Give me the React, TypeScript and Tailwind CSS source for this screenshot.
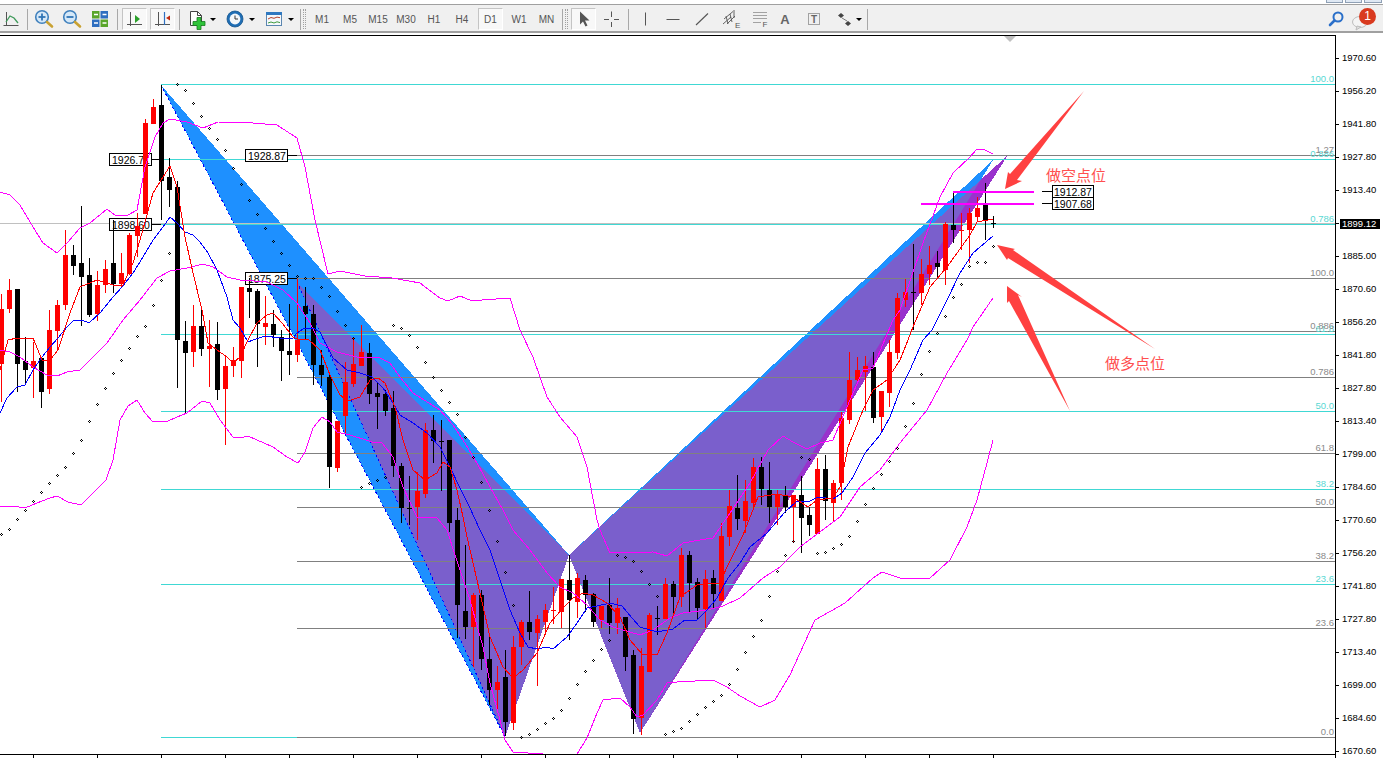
import React from 'react';

// [x, bodyTop, bodyBottom, high, low, isRed]
const CANDLES: [number, number, number, number, number, number][] = [
  [1, 309, 364, 294, 402, 1], [9, 290, 309, 279, 313, 1], [17, 289, 364, 289, 392, 0], [25, 361, 370, 337, 385, 0],
  [33, 361, 368, 342, 398, 1], [41, 358, 392, 357, 408, 0], [49, 330, 389, 310, 394, 1], [57, 305, 331, 300, 351, 1],
  [65, 255, 305, 230, 310, 1], [73, 255, 266, 245, 275, 0], [81, 263, 277, 206, 326, 0], [89, 275, 315, 258, 317, 0],
  [97, 285, 314, 271, 321, 1], [105, 269, 285, 260, 293, 1], [113, 263, 284, 220, 293, 0], [121, 273, 284, 253, 288, 1],
  [129, 235, 274, 233, 275, 1], [137, 226, 236, 213, 257, 1], [145, 123, 214, 119, 214, 1], [153, 107, 124, 99, 124, 1],
  [161, 105, 181, 85, 220, 0], [169, 177, 190, 158, 207, 0], [177, 187, 340, 181, 388, 0], [185, 341, 353, 321, 414, 0],
  [193, 326, 352, 305, 367, 1], [201, 326, 349, 307, 356, 0], [209, 346, 349, 320, 387, 1], [217, 344, 390, 322, 400, 0],
  [225, 366, 389, 357, 445, 1], [233, 360, 366, 347, 377, 1], [241, 287, 361, 287, 378, 1], [249, 288, 292, 278, 318, 0],
  [257, 291, 324, 289, 367, 0], [265, 323, 327, 296, 345, 1], [273, 324, 335, 310, 347, 0], [281, 337, 351, 330, 381, 0],
  [289, 351, 355, 304, 375, 0], [297, 340, 355, 279, 362, 1], [305, 306, 314, 287, 340, 0], [313, 314, 365, 305, 385, 0],
  [321, 365, 375, 350, 386, 0], [329, 377, 467, 373, 488, 0], [337, 421, 468, 421, 472, 1], [345, 382, 416, 362, 434, 1],
  [353, 364, 384, 338, 387, 1], [361, 352, 366, 325, 366, 1], [369, 353, 394, 343, 404, 0], [377, 393, 397, 383, 429, 0],
  [385, 394, 411, 390, 416, 0], [393, 408, 466, 391, 477, 0], [401, 466, 508, 463, 523, 0], [409, 508, 509, 476, 525, 0],
  [417, 491, 507, 472, 540, 1], [425, 430, 494, 423, 498, 1], [433, 430, 441, 415, 463, 0], [441, 441, 442, 420, 491, 0],
  [449, 440, 523, 440, 532, 0], [457, 520, 605, 508, 638, 0], [465, 611, 627, 545, 639, 0], [473, 595, 627, 593, 667, 1],
  [481, 595, 659, 590, 670, 0], [489, 659, 690, 635, 705, 0], [497, 682, 690, 666, 710, 1], [505, 677, 722, 650, 736, 0],
  [513, 647, 723, 636, 730, 1], [521, 622, 647, 620, 665, 1], [529, 622, 632, 591, 640, 0], [537, 619, 633, 615, 686, 1],
  [545, 610, 622, 604, 634, 1], [553, 610, 611, 587, 624, 1], [561, 579, 612, 579, 628, 1], [569, 580, 600, 555, 640, 0],
  [577, 578, 602, 573, 618, 1], [585, 580, 595, 575, 612, 0], [593, 594, 622, 593, 627, 0], [601, 606, 620, 606, 628, 1],
  [609, 605, 623, 578, 634, 0], [617, 608, 623, 598, 634, 1], [625, 617, 657, 617, 671, 0], [633, 655, 719, 650, 734, 0],
  [641, 666, 718, 648, 735, 1], [649, 615, 672, 613, 672, 1], [657, 618, 619, 606, 635, 0], [665, 584, 619, 578, 619, 1],
  [673, 584, 597, 581, 615, 0], [681, 555, 597, 548, 607, 1], [689, 555, 583, 551, 612, 0], [697, 582, 608, 578, 620, 0],
  [705, 579, 609, 570, 628, 1], [713, 578, 594, 570, 608, 0], [721, 536, 601, 523, 601, 1], [729, 506, 537, 490, 546, 1],
  [737, 508, 519, 475, 530, 0], [745, 501, 521, 480, 533, 1], [753, 467, 503, 458, 508, 1], [761, 467, 489, 457, 505, 0],
  [769, 490, 507, 462, 523, 0], [777, 495, 507, 490, 525, 1], [785, 496, 507, 486, 513, 0], [793, 495, 507, 495, 542, 1],
  [801, 495, 518, 476, 553, 0], [809, 515, 525, 507, 536, 0], [817, 469, 534, 458, 534, 1], [825, 469, 501, 455, 520, 0],
  [833, 483, 503, 480, 521, 1], [841, 418, 483, 412, 500, 1], [849, 380, 420, 352, 424, 1], [857, 370, 380, 357, 384, 1],
  [865, 366, 372, 356, 411, 1], [873, 367, 418, 352, 423, 0], [881, 391, 417, 391, 432, 1], [889, 352, 393, 340, 407, 1],
  [897, 298, 353, 293, 359, 1], [905, 292, 300, 279, 307, 1], [913, 292, 293, 244, 330, 0], [921, 274, 293, 259, 305, 1],
  [929, 265, 274, 246, 285, 1], [937, 263, 267, 251, 277, 0], [945, 224, 270, 222, 285, 1], [953, 225, 230, 193, 243, 0],
  [961, 230, 231, 213, 250, 1], [969, 213, 230, 208, 263, 1], [977, 208, 217, 197, 222, 1], [985, 205, 220, 183, 240, 0],
  [993, 223, 224, 216, 228, 0],
];

const BLUE = '0,413 7,398 17,387 25,385 33,370 42,357 50,347 58,338 67,327 73,321 82,320 89,323 100,313 113,297 122,287 133,273 143,257 153,240 163,227 170,217 177,223 185,232 193,235 200,242 208,253 217,270 227,297 233,320 240,328 248,342 253,340 265,336 280,338 293,338 297,333 303,329 313,328 320,332 333,358 347,370 360,373 372,377 383,388 393,403 400,415 413,423 427,433 440,447 450,467 460,488 470,508 480,530 490,550 500,580 510,610 520,633 528,647 537,649 547,647 553,649 567,637 577,623 587,608 597,606 610,603 622,606 632,618 640,627 657,632 673,629 685,620 697,620 707,610 717,598 728,578 740,563 750,547 767,533 785,512 797,501 808,502 818,497 833,499 842,493 853,477 865,453 880,435 890,417 900,390 910,370 923,340 932,330 947,300 960,273 973,253 993,236';

const RED = '0,370 8,340 17,338 33,338 42,360 50,360 58,350 70,313 80,287 97,280 113,285 123,285 133,263 140,240 153,193 163,177 170,166 177,187 185,237 193,273 202,310 208,343 217,350 227,357 233,363 240,357 248,340 257,323 267,315 273,313 282,323 293,337 300,340 308,339 320,350 330,375 340,395 348,401 360,397 370,380 378,378 385,383 395,407 403,440 413,470 425,480 437,473 443,462 450,467 457,490 463,517 467,537 477,580 490,637 503,667 513,678 523,670 537,653 550,623 563,608 573,598 583,593 593,595 607,603 620,617 630,640 642,654 657,655 667,633 680,597 697,585 720,583 727,567 743,535 758,497 777,494 793,497 808,507 817,500 833,498 840,487 848,447 863,410 873,390 887,380 900,360 908,340 913,327 930,287 947,267 970,235 977,222 993,219';

const BAND_UP = '0,192 10,195 20,205 33,227 43,243 57,253 68,242 80,228 90,223 107,209 115,215 128,215 137,210 145,167 155,137 163,123 170,119 187,122 203,128 218,122 253,123 277,125 297,138 305,167 315,220 328,274 340,271 365,276 392,278 420,283 440,298 448,301 460,296 472,301 482,300 510,298 520,330 533,357 547,397 560,417 577,437 587,467 597,520 600,530 610,553 653,552 667,556 683,543 700,540 713,538 730,513 750,483 768,450 783,436 793,442 807,449 820,443 833,440 847,407 863,370 873,368 893,320 900,310 923,243 940,197 953,173 970,157 977,149 983,149 993,154';

const BAND_MID = '0,350 10,352 20,357 33,367 47,375 57,376 67,372 80,370 93,357 107,343 123,320 140,300 157,278 170,271 187,268 203,264 213,267 227,277 240,280 267,282 283,290 297,303 310,323 320,343 337,352 357,357 380,358 390,363 400,377 413,393 440,410 453,425 463,440 477,463 490,487 503,510 513,530 530,550 547,573 560,587 573,593 587,605 600,620 613,627 630,632 640,635 653,630 670,618 683,613 707,610 723,606 740,598 763,578 780,567 800,547 820,532 840,517 860,487 880,470 900,443 927,410 947,373 967,340 973,327 993,298';

const BAND_LOW = '0,506 13,506 25,508 37,503 50,498 57,496 68,502 81,505 93,493 106,480 113,460 120,420 128,406 137,400 145,413 153,422 168,421 177,417 187,413 202,401 210,403 220,420 233,437 240,438 248,436 273,447 287,457 298,463 305,452 313,428 322,417 330,422 337,432 350,435 372,442 382,443 393,457 403,487 417,517 437,518 447,530 455,555 470,600 483,647 490,683 500,720 505,740 513,752 543,754 577,754 587,738 597,713 603,700 620,698 630,707 637,717 643,715 657,700 667,683 677,682 713,680 727,687 740,696 760,707 775,700 790,675 815,620 845,603 873,578 882,572 900,578 930,578 950,560 967,527 977,500 987,463 993,440';

const SAR: [number, number][] = [
  [1, 534], [9, 529], [17, 519], [25, 510], [33, 501], [41, 492], [49, 483], [57, 475], [65, 467], [73, 453], [81, 440], [89, 421],
  [97, 404], [105, 388], [113, 373], [121, 360], [129, 348], [137, 336], [145, 326], [153, 305], [161, 280], [169, 253],
  [177, 84], [185, 90], [193, 103], [201, 116], [209, 128], [217, 139], [225, 150], [233, 168], [241, 184], [249, 200], [257, 214],
  [265, 228], [273, 241], [281, 253], [289, 265], [297, 276], [305, 278], [313, 278], [321, 287], [329, 296], [337, 311], [345, 325],
  [353, 338], [361, 487], [369, 483], [377, 480], [385, 477], [393, 325], [401, 328], [409, 335], [417, 347], [425, 362], [433, 377],
  [441, 390], [449, 402], [457, 414], [465, 437], [473, 457], [481, 482], [489, 510], [497, 541], [505, 572], [513, 605], [521, 737],
  [529, 734], [537, 729], [545, 723], [553, 718], [561, 710], [569, 698], [577, 684], [585, 671], [593, 660], [601, 649], [609, 640],
  [617, 555], [625, 557], [633, 561], [641, 571], [649, 584], [657, 596], [665, 734], [673, 731], [681, 728], [689, 721], [697, 714],
  [705, 707], [713, 701], [721, 695], [729, 684], [737, 669], [745, 652], [753, 636], [761, 620], [769, 596], [777, 571], [785, 555],
  [793, 541], [801, 457], [809, 459], [817, 553], [825, 552], [833, 548], [841, 544], [849, 536], [857, 521], [865, 504], [873, 488],
  [881, 474], [889, 461], [897, 448], [905, 426], [913, 403], [921, 374], [929, 351], [937, 333], [945, 316], [953, 297], [961, 284],
  [969, 266], [977, 262], [985, 262], [993, 246],
];

const CYAN_LEVELS: [number, string][] = [[84, '100.0'], [159, '0.886'], [224, '0.786'], [334, '61.8'], [411, '50.0'], [489, '38.2'], [584, '23.6'], [737, '']];
const GREY_LEVELS: [number, string][] = [[155, '1.27'], [278, '100.0'], [331, '0.886'], [377, '0.786'], [453, '61.8'], [507, '50.0'], [561, '38.2'], [628, '23.6'], [737, '0.0']];

const PRICES = ['1970.60', '1956.20', '1941.80', '1927.80', '1913.40', '1899.12', '1885.00', '1870.60', '1856.20', '1841.80', '1827.80', '1813.40', '1799.00', '1784.60', '1770.60', '1756.20', '1741.80', '1727.80', '1713.40', '1699.00', '1684.60', '1670.60'];

const TIME_TICKS = Array.from({ length: 16 }, (_, i) => 33 + i * 64);

const LABELS: [number, number, string, number][] = [
  [109, 153, '1926.71', 161], [109, 218, '1898.60', 161], [245, 149, '1928.87', 297], [245, 272, '1875.25', 297],
];

const ICON_GREY = '#555555';

const Icon = ({ children, className = 'w-[24px]' }: { children: React.ReactNode; className?: string }) => (
  <div className={`${className} h-[24px] flex items-center justify-center shrink-0`}>
    <svg width="24" height="24" viewBox="0 0 24 24" className="shrink-0">
      {children}
    </svg>
  </div>
);

const Sep = ({ className }: { className: string }) => <div className={`w-px h-[21px] bg-[#a8a8a8] shrink-0 ${className}`} />;

const Grip = ({ className }: { className: string }) => (
  <div className={`w-[3px] h-[20px] shrink-0 border-x border-dotted border-[#a0a0a0] ${className}`} />
);

const Caret = ({ className = 'w-[8px]' }: { className?: string }) => (
  <div className={`${className} flex justify-center shrink-0`}>
    <div className="w-0 h-0 border-x-[3px] border-x-transparent border-t-[3px] border-t-black" />
  </div>
);

const Pressed = ({ children, className = '' }: { children: React.ReactNode; className?: string }) => (
  <div className={`w-[25px] h-[22px] shrink-0 flex items-center justify-center bg-[#f8f8f8] border border-[#c4c4c4] border-r-white border-b-white ${className}`}>
    {children}
  </div>
);

const Period = ({ label, className = 'w-[28px]' }: { label: string; className?: string }) => (
  <div className={`${className} text-center text-[10px] text-[#555] shrink-0`}>{label}</div>
);

const Magnifier = ({ plus }: { plus: boolean }) => (
  <>
    <circle cx="11" cy="10" r="6.3" fill="#d5e8f8" stroke="#3f80bd" strokeWidth="1.6" />
    <path d="M7.5 10h7" stroke="#2f74b5" strokeWidth="1.8" />
    {plus && <path d="M11 6.5v7" stroke="#2f74b5" strokeWidth="1.8" />}
    <path d="M16 15l5 4.5" stroke="#c9a233" strokeWidth="2.6" strokeLinecap="round" />
  </>
);

const Toolbar = () => (
  <div className="h-[36px] shrink-0 flex flex-col bg-white">
    <div className="h-[4px] flex justify-end gap-[2px] pr-px">
      <div className="w-[17px] h-[3px] bg-[#dfe8f3] border-x border-b border-[#8fa0b5]" />
      <div className="w-[17px] h-[3px] bg-[#dfe8f3] border-x border-b border-[#8fa0b5]" />
      <div className="w-[18px] h-[3px] bg-[#dfe8f3] border-x border-b border-[#8fa0b5]" />
    </div>
    <div className="h-[29px] flex items-center pt-[2px] bg-[#f0f0f0] border-t border-t-[#a0a0a0] border-b-2 border-b-[#a0a0a0]">
      <Icon className="w-[22px]">
        <path d="M7.500 5v14M4.500 18.500h15" stroke={ICON_GREY} strokeWidth="1" fill="none" />
        <path d="M7 15l4-6 4 2 4 5" stroke="#3f9a5a" strokeWidth="1.3" fill="none" />
      </Icon>
      <Sep className="ml-[5px]" />
      <Icon className="w-[28px] ml-px"><Magnifier plus /></Icon>
      <Icon className="w-[28px]"><Magnifier plus={false} /></Icon>
      <Icon className="w-[28px] ml-px">
        <rect x="4" y="4" width="7.500" height="7.500" fill="#5aa52b" />
        <rect x="12.500" y="4" width="7.500" height="7.500" fill="#2f6fc0" />
        <rect x="4" y="12.500" width="7.500" height="7.500" fill="#2f6fc0" />
        <rect x="12.500" y="12.500" width="7.500" height="7.500" fill="#5aa52b" />
        <path d="M6 7.500h4M14.500 7.500h4M6 16h4M14.500 16h4" stroke="#fff" strokeWidth="1.600" />
      </Icon>
      <Sep className="ml-[3px]" />
      <Pressed className="ml-[4px]">
        <svg width="23" height="20" viewBox="0 0 23 20">
          <path d="M7.500 3v14M4 15.500h15" stroke={ICON_GREY} strokeWidth="1" />
          <path d="M12 6l5 4-5 4z" fill="#2aa02a" />
        </svg>
      </Pressed>
      <Pressed className="ml-[3px]">
        <svg width="23" height="20" viewBox="0 0 23 20">
          <path d="M7.500 3v14M4 15.500h15" stroke={ICON_GREY} strokeWidth="1" />
          <path d="M13.500 3v13" stroke="#2f6fc0" strokeWidth="1.200" />
          <path d="M15 9l4-2.500v5z" fill="#c02a10" />
        </svg>
      </Pressed>
      <Sep className="ml-[4px]" />
      <Icon className="w-[26px] ml-[3px]">
        <path d="M6.500 4.500h7l4 4v10h-11z" fill="#fff" stroke="#444" strokeWidth="1" />
        <path d="M13.500 4.500v4h4" fill="none" stroke="#444" strokeWidth="1" />
        <path d="M13 10.500h4v4h4v4h-4v4h-4v-4H9v-4h4z" fill="#2fc43a" stroke="#177a20" strokeWidth="0.800" />
      </Icon>
      <Caret />
      <Icon className="w-[26px] ml-[5px]">
        <circle cx="12" cy="12" r="8" fill="#1f6eb5" stroke="#15548c" strokeWidth="0.800" />
        <circle cx="12" cy="12" r="5.400" fill="#f4f7fa" />
        <path d="M12 8.500V12h3" stroke="#333" strokeWidth="1" fill="none" />
      </Icon>
      <Caret />
      <Icon className="w-[26px] ml-[5px]">
        <rect x="4.500" y="5.500" width="15" height="13" fill="#f5f8fb" stroke="#5b86b0" strokeWidth="1" />
        <rect x="4" y="5" width="16" height="3" fill="#2f78c0" />
        <path d="M6 12l3-1.500 3 .8 3-1.200 3 .6" stroke="#b3402a" strokeWidth="1" fill="none" />
        <path d="M6 16l3-1 3 1 3-1.200 3 .8" stroke="#3f9a3f" strokeWidth="1" fill="none" />
      </Icon>
      <Caret />
      <Sep className="ml-[5px]" />
      <Grip className="ml-[2px]" />
      <Period label="M1" className="w-[28px] ml-[2px]" />
      <Period label="M5" />
      <Period label="M15" />
      <Period label="M30" />
      <Period label="H1" />
      <Period label="H4" />
      <Pressed className="ml-[2px]"><span className="text-[10px] text-[#555]">D1</span></Pressed>
      <Period label="W1" className="w-[28px] ml-[2px]" />
      <Period label="MN" className="w-[27px]" />
      <Sep className="ml-[2px]" />
      <Grip className="ml-[2px]" />
      <Pressed className="ml-[3px]">
        <svg width="23" height="20" viewBox="0 0 23 20">
          <path d="M8 2.500v13l3-3 2.500 5 2-1-2.500-5h4.500z" fill="#555" />
        </svg>
      </Pressed>
      <Icon className="w-[28px] ml-px">
        <path d="M12.500 4.500v5.500M12.500 15v5M5 12.500h5M15 12.500h5" stroke={ICON_GREY} strokeWidth="1" />
      </Icon>
      <Sep className="ml-[3px]" />
      <Icon className="w-[28px] ml-[2px]"><path d="M12.500 5.500v13" stroke={ICON_GREY} strokeWidth="1" /></Icon>
      <Icon className="w-[28px]"><path d="M5.500 12.500h13" stroke={ICON_GREY} strokeWidth="1" /></Icon>
      <Icon className="w-[28px] ml-px"><path d="M6 18l12-11.500" stroke={ICON_GREY} strokeWidth="1.100" /></Icon>
      <Icon className="w-[28px] ml-px">
        <path d="M4 17l8-7M8 17l8-8M5 12l9-7.500M7 9l2 8M11 7l2 8M15 3v8" stroke={ICON_GREY} strokeWidth="0.900" fill="none" />
        <text x="16" y="21" fontSize="8" fontFamily="Liberation Sans, sans-serif" fill={ICON_GREY}>E</text>
      </Icon>
      <Icon className="w-[28px] ml-px">
        <path d="M5.500 5.500h13M5.500 8.500h13M5.500 11.500h13M5.500 15.500h8" stroke="#555" strokeWidth="1" strokeDasharray="1 1" />
        <text x="14.500" y="20" fontSize="8" fontFamily="Liberation Sans, sans-serif" fill={ICON_GREY}>F</text>
      </Icon>
      <Icon className="w-[22px]">
        <text x="12" y="17" textAnchor="middle" fontSize="13" fontWeight="700" fontFamily="Liberation Sans, sans-serif" fill="#666">A</text>
      </Icon>
      <Icon className="w-[28px] ml-[4px]">
        <rect x="6.500" y="6.500" width="11" height="11" fill="none" stroke="#555" strokeWidth="1" strokeDasharray="1 1" />
        <text x="12" y="16" textAnchor="middle" fontSize="10" fontWeight="700" fontFamily="Liberation Sans, sans-serif" fill="#666">T</text>
      </Icon>
      <Icon className="w-[22px] ml-[6px]">
        <path d="M8 6l3 2.500-3 2.500-3-2.500zM15 14l3 2.500-3 2.500-3-2.500z" fill="#444" />
        <path d="M9 11l5 3" stroke="#777" strokeWidth="1" />
      </Icon>
      <Caret className="w-[5px]" />
      <Sep className="ml-[6px]" />
      <div className="ml-auto flex items-center pr-[3px]">
        <svg width="20" height="24" viewBox="0 0 20 24">
          <circle cx="13" cy="10" r="4.500" fill="none" stroke="#2a6fc9" strokeWidth="2" />
          <path d="M9.500 13.500L5 18" stroke="#2a6fc9" strokeWidth="2.600" strokeLinecap="round" />
        </svg>
        <div className="relative w-[30px] h-[24px] ml-[5px]">
          <svg width="30" height="24" viewBox="0 0 30 24" className="absolute left-0 top-0">
            <ellipse cx="10" cy="15" rx="7.500" ry="5.500" fill="#f4f4f4" stroke="#bdbdbd" />
            <path d="M7 19l-1 4 5-3z" fill="#e0e0e0" stroke="#bdbdbd" />
          </svg>
          <div className="absolute left-[9px] top-px w-[17px] h-[17px] rounded-full bg-[#d93a1f] text-white text-[12px] leading-[17px] text-center font-['Liberation_Sans',sans-serif]">1</div>
        </div>
      </div>
    </div>
    <div className="h-[2px] bg-white" />
    <div className="h-px bg-white" />
  </div>
);

const Chart = () => (
  <svg width="1335" height="722" viewBox="0 36 1335 722" className="block" fontFamily="'Liberation Sans', Arial, sans-serif">
    <defs>
      <clipPath id="left-blue"><polygon points="161,85 505,737 569,555" /></clipPath>
      <clipPath id="right-blue"><polygon points="569,555 640,733 993,160" /></clipPath>
    </defs>

    {/* harmonic patterns */}
    <g shapeRendering="crispEdges">
      <polygon points="161,85 505,737 569,555" fill="#1e90ff" />
      <polygon points="297,282 505,737 569,555" fill="#9932cc" />
      <polygon points="297,282 505,737 569,555" fill="#7a5fcc" clipPath="url(#left-blue)" />
      <polygon points="569,555 640,733 993,160" fill="#1e90ff" />
      <polygon points="569,555 640,733 1008,155" fill="#9932cc" />
      <polygon points="569,555 640,733 1008,155" fill="#7a5fcc" clipPath="url(#right-blue)" />
      <path d="M161 85L505 737M297 282L505 737" stroke="#0000ff" strokeDasharray="2 3" fill="none" />
    </g>

    {/* fibo levels */}
    <g shapeRendering="crispEdges">
      <rect x="0" y="223" width="1335" height="1" fill="#c0c0c0" />
      {CYAN_LEVELS.map(([y]) => <rect key={y} x="161" y={y} width="1174" height="1" fill="#40d8d4" />)}
      {GREY_LEVELS.map(([y]) => <rect key={y} x="297" y={y} width="1038" height="1" fill="#808080" />)}
    </g>
    <g fontSize="9.5" textAnchor="end">
      {CYAN_LEVELS.map(([y, t]) => <text key={y} x="1334" y={y - 2} fill="#5ad8d3">{t}</text>)}
      {GREY_LEVELS.map(([y, t]) => <text key={y} x="1334" y={y - 2} fill="#8a8a8a">{t}</text>)}
    </g>

    {/* price labels */}
    {LABELS.map(([x, y, t, end]) => (
      <g key={t}>
        <rect x={x + 42} y={y + 6} width={end - x - 42} height="1" fill="#000" shapeRendering="crispEdges" />
        <rect x={x + 0.5} y={y + 0.5} width="42" height="12" fill="#fff" stroke="#000" shapeRendering="crispEdges" />
        <text x={x + 3} y={y + 10.5} fontSize="10.5" fill="#000">{t}</text>
      </g>
    ))}

    {/* candles */}
    <g shapeRendering="crispEdges">
      {CANDLES.map(([x, top, bot, hi, lo, up]) => (
        <g key={x} fill={up ? '#ff0000' : '#000000'}>
          <rect x={x} y={hi} width="1" height={lo - hi} />
          <rect x={x - 2} y={top} width="5" height={Math.max(1, bot - top)} />
        </g>
      ))}
    </g>

    {/* indicators */}
    <g fill="none" shapeRendering="crispEdges">
      <polyline points={BAND_UP} stroke="#ff00ff" />
      <polyline points={BAND_MID} stroke="#ff00ff" />
      <polyline points={BAND_LOW} stroke="#ff00ff" />
      <polyline points={BLUE} stroke="#0000ff" />
      <polyline points={RED} stroke="#ff0000" />
    </g>
    <path
      d={SAR.map(([x, y]) => `M${x} ${y - 1}h1v1h-1zM${x - 1} ${y}h1v1h-1zM${x + 1} ${y}h1v1h-1zM${x} ${y + 1}h1v1h-1z`).join('')}
      fill="#000"
      shapeRendering="crispEdges"
    />

    {/* drawn entries */}
    <g shapeRendering="crispEdges">
      <rect x="953" y="191" width="81" height="2" fill="#ff00ff" />
      <rect x="921" y="203" width="113" height="2" fill="#ff00ff" />
      <rect x="1042" y="191" width="11" height="1" fill="#000" />
      <rect x="1042" y="203" width="11" height="1" fill="#000" />
      <rect x="1052.5" y="185.5" width="41" height="12" fill="#fff" stroke="#000" />
      <rect x="1052.5" y="197.5" width="41" height="12" fill="#fff" stroke="#000" />
    </g>
    <text x="1054" y="195.5" fontSize="10.5" fill="#000">1912.87</text>
    <text x="1054" y="207.5" fontSize="10.5" fill="#000">1907.68</text>

    {/* arrows */}
    <polygon points="1084,91 1017,180 1022,181 1005,189 1008,172 1010,174" fill="#ff4040" />
    <polygon points="1155,349 1013,250 1015,249 997,245 1007,260 1008,258" fill="#ff4040" />
    <polygon points="1070,411 1018,295 1022,297 1007,286 1007,303 1009,301" fill="#ff4040" />
    <text x="1046" y="181" fontSize="15" fill="#ff4f4f" fontFamily="'Noto Sans CJK SC', sans-serif">做空点位</text>
    <text x="1105" y="369" fontSize="15" fill="#ff4f4f" fontFamily="'Noto Sans CJK SC', sans-serif">做多点位</text>

    {/* shift marker and time scale */}
    <polygon points="1004,36 1016,36 1010,42" fill="#c0c0c0" />
    <g shapeRendering="crispEdges" fill="#000">
      <rect x="0" y="754" width="1335" height="1" />
      {TIME_TICKS.map((x) => <rect key={x} x={x} y="755" width="1" height="3" />)}
    </g>
  </svg>
);

const PriceAxis = () => (
  <div className="w-[48px] shrink-0 -mt-px border-l border-black pt-[7px] h-[723px] overflow-hidden font-['Liberation_Sans',Arial,sans-serif]">
    {PRICES.map((p) => (
      <div key={p} className="h-[33px] flex items-center">
        <div className="w-[3px] h-px bg-black shrink-0" />
        {p === '1899.12' ? (
          <span className="ml-[1px] pl-[2px] pr-[4px] h-[10px] leading-[10px] bg-black text-white text-[9.5px]">{p}</span>
        ) : (
          <span className="ml-[3px] text-[9.5px] text-black">{p}</span>
        )}
      </div>
    ))}
  </div>
);

export default function App() {
  return (
    <div className="w-[1383px] h-[758px] overflow-hidden bg-white flex flex-col font-['Liberation_Sans',Arial,sans-serif]">
      <Toolbar />
      <div className="flex flex-1 min-h-0">
        <div className="w-[1335px] shrink-0 relative">
          <div className="absolute left-0 right-0 top-[-1px] h-px bg-black" />
          <Chart />
        </div>
        <PriceAxis />
      </div>
    </div>
  );
}
